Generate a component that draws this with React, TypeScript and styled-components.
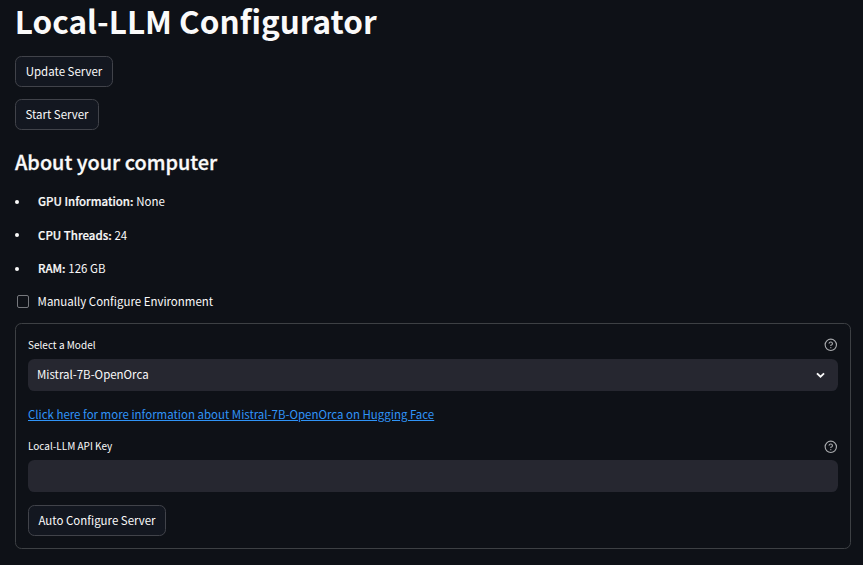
import React from "react";
import styled, { createGlobalStyle } from "styled-components";

const Global = createGlobalStyle`
  *, *::before, *::after { box-sizing: border-box; }
  html, body { margin: 0; background: #0e1117; }
  body {
    color: #fafafa;
    font-family: "Noto Sans CJK SC", "Source Sans Pro", "Noto Sans", sans-serif;
    font-size: 11.47px;
  }
`;

const Page = styled.main`
  display: flex;
  flex-direction: column;
  align-items: flex-start;
  height: 565px;
  padding: 0 12px 0 15px;
  background: #0e1117;
`;

const Title = styled.h1`
  margin: 0 0 0 -0.2px;
  height: 56px;
  line-height: 41px;
  font-size: 31.5px;
  font-weight: 700;
  white-space: nowrap;
`;

const Button = styled.button<{ $width: number }>`
  width: ${(p) => p.$width}px;
  height: 31px;
  padding: 0;
  border: 1px solid #41434a;
  border-radius: 6.4px;
  background: #131720;
  color: inherit;
  font: inherit;
  line-height: 29px;
  white-space: nowrap;
`;

const Actions = styled.div`
  display: flex;
  flex-direction: column;
  gap: 12px;
`;

const Heading = styled.h2`
  margin: 16px 0 0;
  line-height: 32px;
  font-size: 19.9px;
  font-weight: 500;
  -webkit-text-stroke: 0.3px currentColor;
  white-space: nowrap;
`;

const Facts = styled.ul`
  display: flex;
  flex-direction: column;
  gap: 13.5px;
  margin: 13px 0 0;
  padding: 0;
  list-style: none;
`;

const Fact = styled.li`
  display: flex;
  align-items: center;
  height: 20px;
  line-height: 20px;

  &::before {
    content: "";
    width: 4px;
    height: 4px;
    margin: 1px 19px 0 0;
    border-radius: 50%;
    background: #fafafa;
  }
`;

const FactName = styled.strong`
  margin-right: 2.8px;
  font-weight: 500;
  -webkit-text-stroke: 0.2px currentColor;
`;

const CheckRow = styled.label`
  display: flex;
  align-items: center;
  gap: 8.6px;
  height: 20px;
  margin: 13px 0 0 2px;
  line-height: 20px;
`;

const CheckBox = styled.span`
  width: 12px;
  height: 13px;
  border: 1px solid #76787d;
  border-radius: 2px;
`;

const Form = styled.form`
  display: flex;
  flex-direction: column;
  align-items: flex-start;
  width: 836px;
  height: 226px;
  margin-top: 12px;
  padding: 12px;
  border: 1px solid #3d4044;
  border-radius: 6.4px;
`;

const LabelRow = styled.div`
  display: flex;
  justify-content: space-between;
  align-items: flex-start;
  width: 100%;
  height: 19px;
  margin-bottom: 4px;
  font-size: 10px;
  line-height: 17px;
`;

const Field = styled.div`
  display: flex;
  align-items: center;
  justify-content: space-between;
  width: 100%;
  height: 32px;
  padding: 0 11px 0 9px;
  border-radius: 6.4px;
  background: #262730;
  line-height: 18px;
`;

const FieldValue = styled.span`
  padding-bottom: 2px;
`;

const Link = styled.a`
  height: 20px;
  margin: 13px 0 13px;
  color: #3094f7;
  line-height: 20px;
  text-decoration: underline;
  white-space: nowrap;
`;

const Submit = styled(Button)`
  margin-top: 13px;
`;

const HelpSvg = styled.svg<{ $drop: number }>`
  margin: ${(p) => p.$drop}px 0 0 0;
`;

const HelpIcon = ({ drop }: { drop: number }) => (
  <HelpSvg $drop={drop} width="13.6" height="13.6" viewBox="0 0 24 24" fill="none" stroke="#a9abae" strokeWidth="2" strokeLinecap="round" strokeLinejoin="round">
    <circle cx="12" cy="12" r="10" />
    <path d="M9.09 9a3 3 0 0 1 5.83 1c0 2-3 3-3 3" />
    <path d="M12 17h.01" />
  </HelpSvg>
);

const Chevron = () => (
  <svg width="13" height="13" viewBox="0 0 13 13" fill="none" stroke="#fafafa" strokeWidth="1.8" strokeLinecap="square" strokeLinejoin="miter">
    <path d="M3.6 4.9 6.5 7.7 9.4 4.9" />
  </svg>
);

const facts = [
  ["GPU Information:", "None"],
  ["CPU Threads:", "24"],
  ["RAM:", "126 GB"],
];

export default function App() {
  return (
    <>
      <Global />
      <Page>
        <Title>Local-LLM Configurator</Title>
        <Actions>
          <Button $width={98}>Update Server</Button>
          <Button $width={84}>Start Server</Button>
        </Actions>
        <Heading>About your computer</Heading>
        <Facts>
          {facts.map(([name, value]) => (
            <Fact key={name}>
              <FactName>{name}</FactName>
              {value}
            </Fact>
          ))}
        </Facts>
        <CheckRow>
          <CheckBox />
          Manually Configure Environment
        </CheckRow>
        <Form>
          <LabelRow>
            Select a Model
            <HelpIcon drop={2.4} />
          </LabelRow>
          <Field>
            <FieldValue>Mistral-7B-OpenOrca</FieldValue>
            <Chevron />
          </Field>
          <Link href="#">Click here for more information about Mistral-7B-OpenOrca on Hugging Face</Link>
          <LabelRow>
            Local-LLM API Key
            <HelpIcon drop={3.4} />
          </LabelRow>
          <Field />
          <Submit type="button" $width={138}>Auto Configure Server</Submit>
        </Form>
      </Page>
    </>
  );
}
